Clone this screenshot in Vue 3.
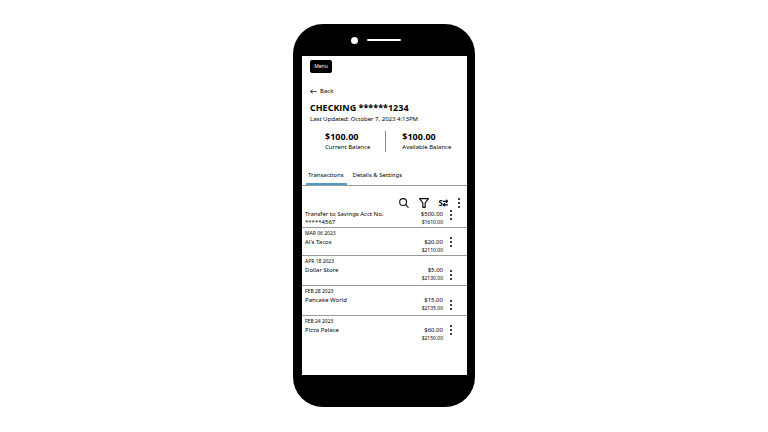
<template>
  <main class="stage">
    <div class="phone">
      <div class="phone-top">
        <span class="camera"></span>
        <span class="speaker"></span>
      </div>

      <div class="screen">
        <header class="account">
          <button type="button" class="menu-btn">Menu</button>
          <a href="#" class="back">
            <svg viewBox="0 0 14 12" aria-hidden="true">
              <path d="M13.5 5H1M5.5 1L1 5l4.5 4" />
            </svg>
            Back
          </a>
          <h1>{{ account.name }}</h1>
          <p class="updated">Last Updated: {{ account.updated }}</p>
        </header>

        <section class="balances">
          <div v-for="item in balances" :key="item.label" class="balance">
            <strong>{{ item.amount }}</strong>
            <span>{{ item.label }}</span>
          </div>
        </section>

        <nav class="tabs">
          <button
            v-for="tab in tabs"
            :key="tab"
            type="button"
            :class="{ active: tab === activeTab }"
            @click="activeTab = tab"
          >
            {{ tab }}
          </button>
        </nav>

        <div class="toolbar">
          <button type="button" aria-label="Search">
            <svg viewBox="0 0 22 22">
              <circle cx="9" cy="9" r="7.5" />
              <path d="M14.5 14.5l6.5 6.5" />
            </svg>
          </button>
          <button type="button" aria-label="Filter">
            <svg viewBox="0 0 22 22">
              <path d="M1.5 1.5h19L13.5 11v9.5h-5V11z" />
            </svg>
          </button>
          <button type="button" class="sort" aria-label="Sort by amount">
            <span>S</span>
            <svg viewBox="0 0 10 16">
              <path d="M0 4.5h9M6 1.5l3 3-3 3M10 11.5H1M4 8.5l-3 3 3 3" />
            </svg>
          </button>
          <button type="button" class="dots" aria-label="More options">
            <i></i><i></i><i></i>
          </button>
        </div>

        <ul class="list">
          <li
            v-for="row in transactions"
            :key="row.balance"
            class="row"
            :class="{ tall: row.tall }"
          >
            <div class="info">
              <span v-if="row.date" class="date">{{ row.date }}</span>
              <span class="name">{{ row.name }}</span>
            </div>
            <div class="amounts">
              <span class="amount">{{ row.amount }}</span>
              <span class="running">{{ row.balance }}</span>
            </div>
            <button type="button" class="dots" :aria-label="`Options for ${row.name}`">
              <i></i><i></i><i></i>
            </button>
          </li>
        </ul>
      </div>
    </div>
  </main>
</template>

<script setup>
import { ref } from "vue";

const account = {
  name: "CHECKING ******1234",
  updated: "October 7, 2023 4:13PM",
};

const balances = [
  { amount: "$100.00", label: "Current Balance" },
  { amount: "$100.00", label: "Available Balance" },
];

const tabs = ["Transactions", "Details & Settings"];
const activeTab = ref("Transactions");

const transactions = [
  { name: "Transfer to Savings Acct No. *****4567", amount: "$500.00", balance: "$1610.00" },
  { date: "MAR 06 2023", name: "Al's Tacos", amount: "$20.00", balance: "$2110.00" },
  { date: "APR 18 2023", name: "Dollar Store", amount: "$5.00", balance: "$2130.00", tall: true },
  { date: "FEB 28 2023", name: "Pancake World", amount: "$15.00", balance: "$2135.00", tall: true },
  { date: "FEB 24 2023", name: "Pizza Palace", amount: "$60.00", balance: "$2150.00" },
];
</script>

<style>
body {
  margin: 0;
  background: #fff;
}
</style>

<style scoped>
.stage {
  display: flex;
  justify-content: center;
  padding: 24px 0;
  font-family: "Noto Sans", "Open Sans", sans-serif;
  font-size: 6px;
  line-height: 9px;
  color: #000;
}

button {
  padding: 0;
  border: 0;
  background: none;
  color: inherit;
  font: inherit;
  cursor: pointer;
}

svg {
  display: block;
  fill: none;
  stroke: #111;
  stroke-width: 2.5;
}

.phone {
  box-sizing: border-box;
  width: 100%;
  max-width: 182px;
  padding: 0 8px 32px 9px;
  border-radius: 30px;
  background: #000;
}

.phone-top {
  display: flex;
  align-items: center;
  justify-content: center;
  gap: 9px;
  height: 32px;
}

.camera {
  width: 7px;
  height: 7px;
  border-radius: 50%;
  background: #fff;
}

.speaker {
  width: 34px;
  height: 2px;
  margin-right: 17px;
  border-radius: 1px;
  background: #fff;
}

.screen {
  padding-bottom: 32px;
  background: #fff;
}

.account {
  display: flex;
  flex-direction: column;
  align-items: flex-start;
  padding: 4px 8px 0;
}

.menu-btn {
  width: 22px;
  height: 13px;
  border-radius: 2px;
  background: #000;
  color: #fff;
  font-size: 5px;
  line-height: 13px;
}

.back {
  display: flex;
  align-items: center;
  gap: 3px;
  margin-top: 14px;
  color: inherit;
  text-decoration: none;
}

.back svg {
  width: 7px;
  height: 6px;
  stroke-width: 1.5;
}

h1 {
  margin: 6px 0 0;
  font-size: 9px;
  line-height: 12px;
  font-weight: 700;
  font-family: "Open Sans", "Noto Sans", sans-serif;
}

.updated {
  margin: 1px 0 0;
}

.balances {
  display: flex;
  padding: 7px 0 0 23px;
}

.balance {
  display: flex;
  flex-direction: column;
  white-space: nowrap;
}

.balance + .balance {
  margin-left: 15px;
  padding-left: 16px;
  border-left: 1px solid #888;
}

.balance strong {
  font-size: 9px;
  line-height: 12px;
  font-family: "Open Sans", "Noto Sans", sans-serif;
}

.tabs {
  display: flex;
  gap: 4px;
  margin-top: 16px;
  padding-left: 4px;
  border-bottom: 1px solid #999;
}

.tabs button {
  padding: 3px 3px 3px 2px;
  border-bottom: 2px solid transparent;
}

.tabs .active {
  border-bottom-color: #4a9cc9;
}

.toolbar {
  display: flex;
  align-items: center;
  justify-content: flex-end;
  gap: 10px;
  padding: 12px 7px 2px 0;
}

.toolbar svg {
  width: 10px;
  height: 10px;
}

.sort {
  display: flex;
  align-items: center;
  font-size: 8px;
  line-height: 10px;
  font-weight: 700;
}

.toolbar .sort svg {
  width: 5px;
  height: 8px;
}

.dots {
  display: flex;
  flex-direction: column;
  align-items: center;
  gap: 2px;
}

.dots i {
  width: 2px;
  height: 2px;
  border-radius: 50%;
  background: #000;
}

.list {
  margin: 0;
  padding: 0;
  list-style: none;
}

.row {
  display: flex;
  align-items: flex-end;
  padding: 2px 15px 1px 3px;
  border-bottom: 1px solid #999;
}

.row:first-child {
  padding-top: 0;
}

.row:last-child {
  border-bottom: 0;
}

.row.tall {
  padding-bottom: 3px;
}

.info {
  flex: 1;
  display: flex;
  flex-direction: column;
  gap: 1px;
  padding-bottom: 8px;
  line-height: 8px;
}

.row:first-child .info {
  padding-bottom: 0;
}

.name {
  max-width: 84px;
}

.date {
  font-size: 5px;
  line-height: 7px;
}

.amounts {
  display: flex;
  flex-direction: column;
  text-align: right;
  line-height: 8px;
}

.running {
  font-size: 5px;
}

.row .dots {
  align-self: center;
  margin-left: 7px;
}

.row:first-child .dots {
  align-self: flex-start;
}

.row.tall .dots {
  padding-top: 9px;
}
</style>
